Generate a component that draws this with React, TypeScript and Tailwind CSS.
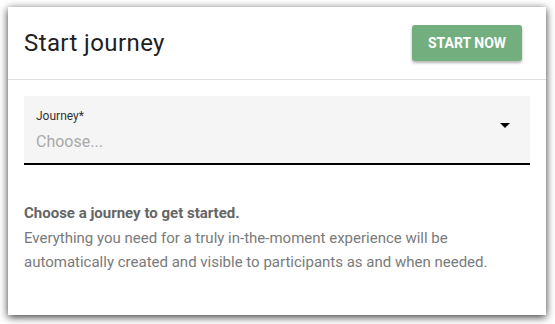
const App = () => {
  return (
    <div className="w-[555px] h-[324px] bg-white pl-2 pt-[7px] font-['Roboto',sans-serif]">
      <div className="w-[538px] h-[308px] bg-white shadow-[0_2px_8px_rgba(0,0,0,0.8)] flex flex-col">
        {/* header */}
        <div className="h-[73px] flex items-center justify-between pl-4 pr-6 border-b border-[#e0e0e0]">
          <h1 className="text-2xl text-[#212121] tracking-[0.4px]">Start journey</h1>
          <button className="w-[110px] h-9 rounded-[3px] bg-[#73ae7f] text-white text-sm font-bold uppercase shadow-[0_2px_3px_rgba(0,0,0,0.3)]">
            Start now
          </button>
        </div>

        {/* body */}
        <div className="px-4 pt-4">
          <div className="flex justify-between bg-[#f5f5f5] border-b-2 border-black pl-3 pr-5 pt-3 pb-[9px]">
            <div className="flex flex-col">
              <span className="text-xs leading-4 text-[#333]">Journey*</span>
              <span className="mt-1.5 text-base leading-6 text-[#a9a9a9]">Choose...</span>
            </div>
            <div className="pt-[15px]">
              <svg width="10" height="5" viewBox="0 0 10 5">
                <path d="M0 0h10L5 5z" fill="#000" />
              </svg>
            </div>
          </div>

          <div className="mt-9">
            <p className="text-[15px] leading-[25px] font-bold text-[#666]">Choose a journey to get started.</p>
            <p className="text-[15px] leading-6 text-[#7a7a7a]">
              Everything you need for a truly in-the-moment experience will be automatically created and visible to
              participants as and when needed.
            </p>
          </div>
        </div>
      </div>
    </div>
  );
};

export default App;
